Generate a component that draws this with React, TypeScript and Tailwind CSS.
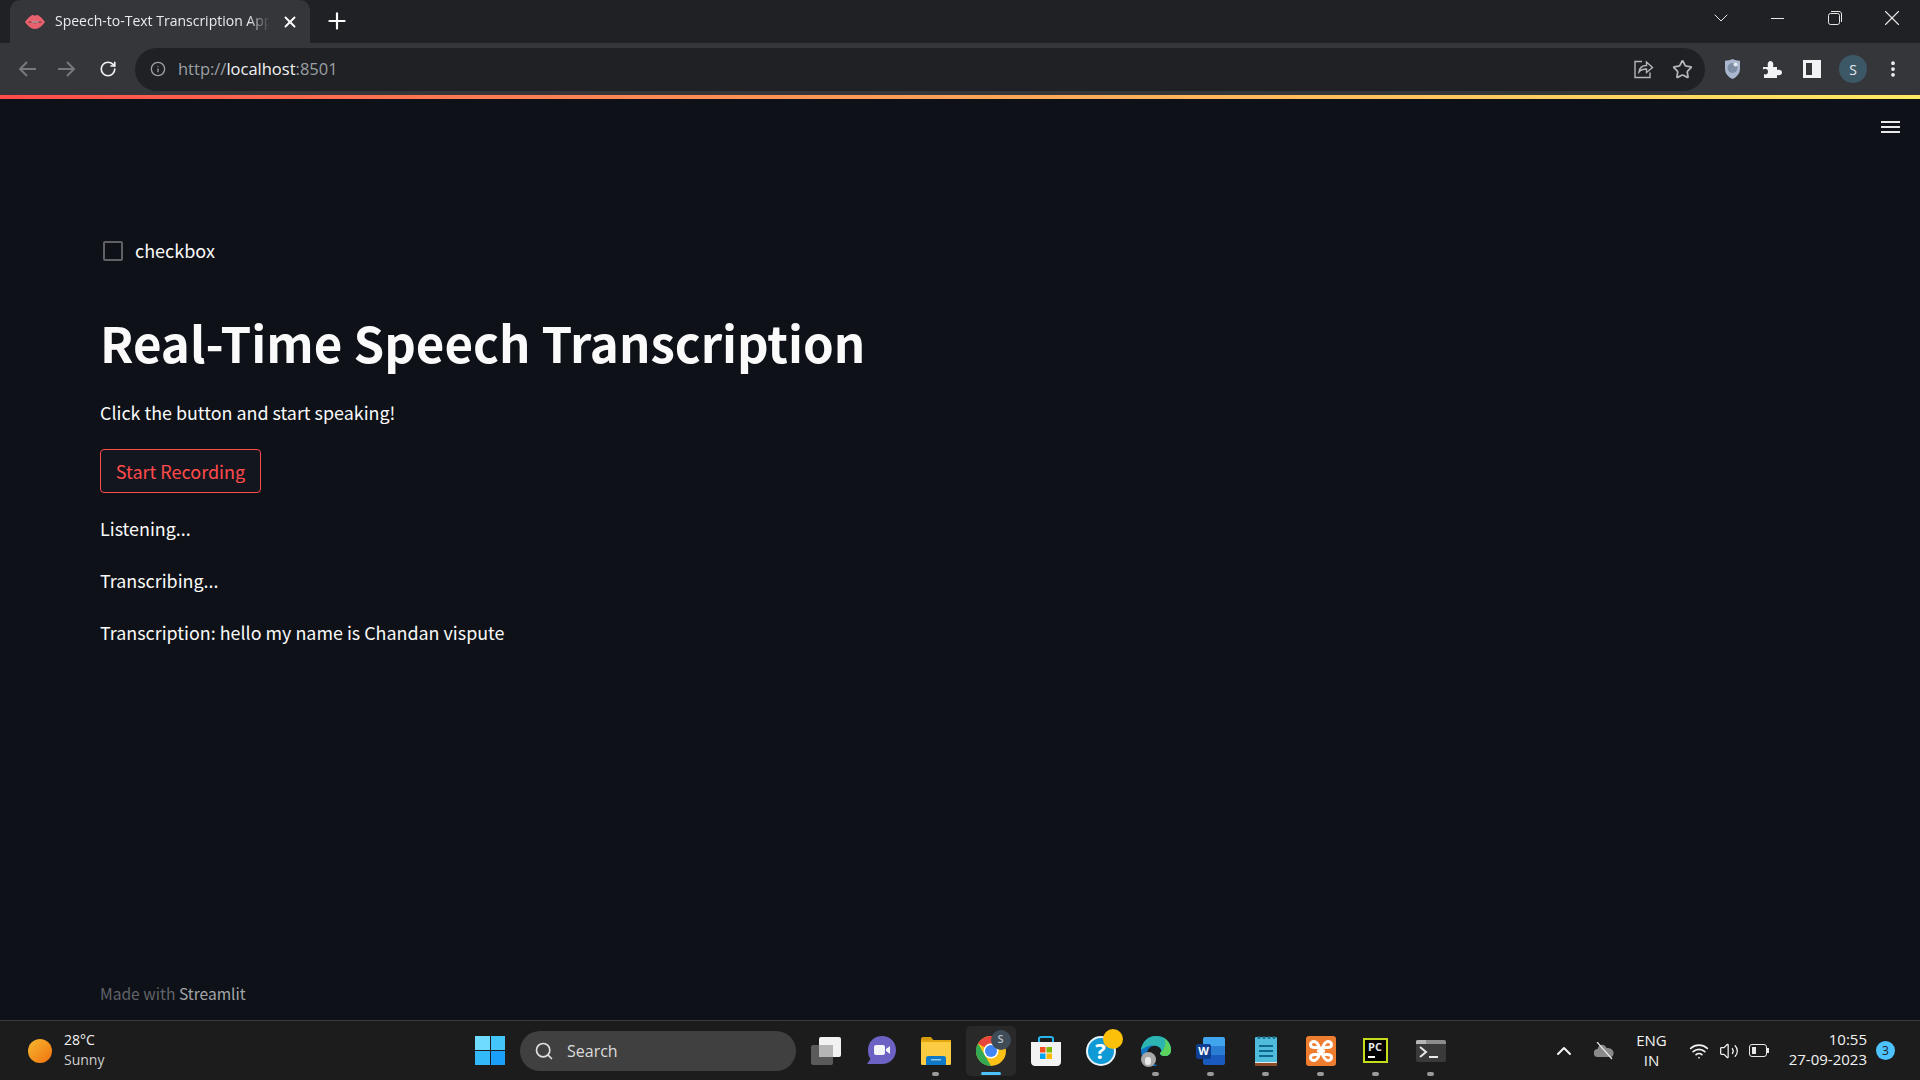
import { ChevronDown, ChevronUp, Info, MoreVertical, Plus, RotateCw, Search, Star, Volume2, Wifi, X } from 'lucide-react'
import type { ReactNode } from 'react'

const pageFont = "font-['Noto_Sans_CJK_SC','Noto_Sans',sans-serif]"
const systemFont = "font-['Open_Sans','Noto_Sans',sans-serif]"

const Lips = () => (
  <svg width="20" height="14" viewBox="0 0 20 14">
    <path d="M0 7C3 3 6 0 8 0c1 0 1.500.5 2 1 .5-.5 1-1 2-1 2 0 5 3 8 7-3 4-6 7-10 7S3 11 0 7z" fill="#e8616f" />
    <path d="M3 7c3-1 11-1 14 0-3 1.500-11 1.500-14 0z" fill="#5c1a1c" />
    <path d="M5 6.900c3-.5 7-.5 10 0-3 .8-7 .8-10 0z" fill="#f4f0ee" />
  </svg>
)

const NavArrow = ({ flip }: { flip?: boolean }) => (
  <svg className={flip ? 'rotate-180' : ''} width="20" height="20" viewBox="0 0 20 20" fill="none" stroke="#77787b" strokeWidth="2">
    <path d="M19 10H3M10 3l-7 7 7 7" />
  </svg>
)

const ShareIcon = () => (
  <svg width="20" height="20" viewBox="0 0 20 20" fill="none" stroke="#b4b6b9" strokeWidth="1.400">
    <path d="M8 2.500H1v16h15v-5" />
    <path d="M5 13c.5-4 3.500-6.500 7.500-6.500V3l6 5.500-6 5V10C9 10 6.500 11 5 13z" />
  </svg>
)

const ShieldIcon = () => (
  <svg width="15" height="20" viewBox="0 0 15 20">
    <path d="M7.500 0c2.500 1.200 4.500 1.700 7.500 1.700v8c0 5-3.500 8.500-7.500 10.300C3.500 18.200 0 14.700 0 9.700v-8C3 1.700 5 1.200 7.500 0z" fill="#a9b7cf" />
    <circle cx="7.500" cy="9" r="5" fill="#7f8da5" />
    <circle cx="10.500" cy="5.500" r="2" fill="#e4e8ef" />
  </svg>
)

const PuzzleIcon = () => (
  <svg width="19" height="19" viewBox="0 0 19 19" fill="#f1f3f4">
    <path d="M0 7h5C4 3 5.500 1 7.500 1S11 3 10 7h4v3c3-1 5 .5 5 2.500S17 16 14 15v3H1v-4c2 1 4 0 4-2.500S2 8 0 9.500z" />
  </svg>
)

const SidePanelIcon = () => (
  <span className="flex h-[18px] w-[18px] border-[3px] border-[#f1f3f4]">
    <span className="ml-auto h-full w-[6px] bg-[#f1f3f4]" />
  </span>
)

const MaximizeIcon = () => (
  <svg width="14" height="14" viewBox="0 0 14 14" fill="none" stroke="#e8e8e8" strokeWidth="1">
    <rect x="0.500" y="2.500" width="11" height="11" rx="2" />
    <path d="M3 .5h8c1.500 0 2.500 1 2.500 2.500v8" />
  </svg>
)

const TaskViewIcon = () => (
  <svg width="30" height="28" viewBox="0 0 30 28">
    <rect x="8" y="0" width="22" height="20" rx="2" fill="#f2f2f2" />
    <rect x="0" y="8" width="22" height="20" rx="2" fill="#5a5a5a" />
    <rect x="8" y="8" width="14" height="12" fill="#b5b5b5" />
  </svg>
)

const ChatIcon = () => (
  <svg width="30" height="29" viewBox="0 0 30 29">
    <path d="M16 0c8 0 14 6 14 14s-6 14-14 14H1l3.500-5C2.500 20.500 2 17.500 2 14 2 6 8 0 16 0z" fill="#6b62c4" />
    <rect x="8" y="9" width="11" height="10" rx="2" fill="#f4f4fb" />
    <path d="M20 13l4-3v8l-4-3z" fill="#f4f4fb" />
  </svg>
)

const FolderIcon = () => (
  <svg width="30" height="28" viewBox="0 0 30 28">
    <path d="M0 2c0-1 1-2 2-2h8l3 4H0z" fill="#d69c0c" />
    <rect x="0" y="3" width="30" height="25" rx="1.500" fill="#fbcb41" />
    <rect x="0" y="3" width="30" height="2" fill="#e3a80f" />
    <path d="M5 21c0-1 1-2 2-2h16c1 0 2 1 2 2v7H5z" fill="#0f79c7" />
    <rect x="10" y="22" width="10" height="1.500" fill="#8cc8f0" />
  </svg>
)

const ChromeIcon = () => (
  <span className="relative flex h-[30px] w-[30px]">
    <svg width="30" height="30" viewBox="0 0 30 30">
      <circle cx="15" cy="15" r="15" fill="#fbc116" />
      <path d="M15 0a15 15 0 0 1 13 7.500H15a7.500 7.500 0 0 0-6.500 3.700L2 7.500A15 15 0 0 1 15 0z" fill="#e8453c" />
      <path d="M2 7.500l6.500 11.200L15 30A15 15 0 0 1 2 7.500z" fill="#34a853" />
      <circle cx="15" cy="15" r="7.500" fill="#fff" />
      <circle cx="15" cy="15" r="6" fill="#4285f4" />
    </svg>
    <span className="absolute right-[-5px] top-[-6px] flex h-[20px] w-[20px] items-center justify-center rounded-full bg-[#3f4c57] text-[11px] font-semibold text-[#b9c2ca]">S</span>
  </span>
)

const StoreIcon = () => (
  <svg width="30" height="30" viewBox="0 0 30 30">
    <path d="M8 7V2.500C8 1.500 9 1 10 1h10c1 0 2 .5 2 1.500V7" fill="none" stroke="#26b4ea" strokeWidth="2" />
    <path d="M0 6h30v20c0 2-1.500 4-4 4H4c-2.500 0-4-2-4-4z" fill="#f3f3f3" />
    <rect x="9" y="11" width="5.500" height="5.500" fill="#f25022" />
    <rect x="15.500" y="11" width="5.500" height="5.500" fill="#7fba00" />
    <rect x="9" y="17.500" width="5.500" height="5.500" fill="#00a4ef" />
    <rect x="15.500" y="17.500" width="5.500" height="5.500" fill="#ffb900" />
  </svg>
)

const HelpIcon = () => (
  <span className="relative flex h-[30px] w-[30px] items-center justify-center rounded-full border-[2px] border-[#e8f4fa] bg-[#0f9ad6] text-[22px] font-bold text-white">
    ?
    <span className="absolute right-[-9px] top-[-9px] h-[20px] w-[20px] rounded-full bg-[#fcc00a]" />
  </span>
)

const EdgeIcon = () => (
  <span className="relative flex h-[30px] w-[30px]">
    <svg width="30" height="30" viewBox="0 0 30 30">
      <path d="M0 14C1 6 7 0 15 0c9 0 15 6 15 14 0 4-3 6-6 6-3 0-5-1-5-3 2-1 2-4-1-6-5-3-12 0-12 7 0 6 5 11 11 11-2 1-4 1-6 1C5 30 0 22 0 14z" fill="#0f74c4" />
      <path d="M0 14C1 6 7 0 15 0c9 0 15 6 15 14 0 4-3 6-6 6-3 0-5-1-5-3 2-1 2-4-1-6-6-3-13-1-18 3z" fill="#2cb5b0" />
      <path d="M19 17c0 2 2 3 5 3 3 0 6-2 6-6 0-5-3-9-7-12 3 5 1 11-4 15z" fill="#5bd35b" />
    </svg>
    <span className="absolute bottom-[-1px] left-0 flex h-[15px] w-[15px] items-end justify-center overflow-hidden rounded-full bg-[#a8a8a8]">
      <span className="mb-[2px] h-[8px] w-[6px] rounded-full bg-[#e9e9e9]" />
    </span>
  </span>
)

const WordIcon = () => (
  <span className="relative flex h-[28px] w-[29px] flex-col items-end">
    <span className="h-[9px] w-[22px] rounded-t-[2px] bg-[#41a5ee]" />
    <span className="h-[9px] w-[22px] bg-[#2b7cd3]" />
    <span className="h-[10px] w-[22px] rounded-b-[2px] bg-[#185abd]" />
    <span className="absolute left-0 top-[7px] flex h-[15px] w-[15px] items-center justify-center rounded-[2px] bg-[#103f91] text-[11px] font-bold text-white">W</span>
  </span>
)

const NotepadIcon = () => (
  <svg width="22" height="30" viewBox="0 0 22 30">
    <rect x="0" y="1" width="22" height="29" rx="1" fill="#4fbcdc" />
    <rect x="0" y="27" width="22" height="3" fill="#8a4b2a" />
    <rect x="0" y="26" width="22" height="1" fill="#e6e6e6" />
    <circle cx="4" cy="1.500" r="1.500" fill="#1c6f8a" />
    <circle cx="9" cy="1.500" r="1.500" fill="#1c6f8a" />
    <circle cx="14" cy="1.500" r="1.500" fill="#1c6f8a" />
    <circle cx="19" cy="1.500" r="1.500" fill="#1c6f8a" />
    <rect x="4" y="9" width="14" height="2" fill="#10688a" />
    <rect x="4" y="14" width="14" height="2" fill="#10688a" />
    <rect x="4" y="19" width="14" height="2" fill="#10688a" />
  </svg>
)

const XamppIcon = () => (
  <span className="flex h-[30px] w-[30px] items-center justify-center rounded-[3px] bg-[#ef7d2f]">
    <svg width="24" height="22" viewBox="0 0 24 22" fill="none" stroke="#fff" strokeWidth="3">
      <path d="M9 7.500H6C3 7.500 1.500 6 1.500 4.500S3 1.500 5 1.500c2 0 3 1.500 4 3l6 13c1 1.500 2 3 4 3s3.500-1.500 3.500-3-1.500-3-4.500-3h-3" />
      <path d="M15 7.500h3c3 0 4.500-1.500 4.500-3S21 1.500 19 1.500c-2 0-3 1.500-4 3l-6 13c-1 1.500-2 3-4 3s-3.500-1.500-3.500-3 1.500-3 4.500-3h3" />
      <path d="M8 11h8" />
    </svg>
  </span>
)

const PyCharmIcon = () => (
  <span className="flex h-[25px] w-[25px] flex-col border-[2px] border-[#c7dc1a] bg-black px-[3px] pt-[1px] text-[11px] font-bold leading-[12px] text-[#e8e8e8]">
    PC
    <span className="mt-[3px] h-[2px] w-[7px] bg-white" />
  </span>
)

const TerminalIcon = () => (
  <span className="flex h-[22px] w-[30px] flex-col overflow-hidden rounded-[2px] bg-[#3a3a3a]">
    <span className="flex h-[4px] bg-[#8c8c8c]">
      <span className="w-[10px] bg-[#b5b5b5]" />
    </span>
    <svg width="30" height="18" viewBox="0 0 30 18" fill="none" stroke="#e8e8e8" strokeWidth="2">
      <path d="M4 3l6 5-6 5" />
      <path d="M13 13h9" />
    </svg>
  </span>
)

const OneDriveIcon = () => (
  <svg width="20" height="18" viewBox="0 0 20 18">
    <path d="M4 15a4 4 0 0 1-.5-8C4.500 3.500 7 2 9.500 3c1.500.5 2.500 1.500 3 3 3-.5 6 1 7 4 .5 3-1 5-3 5z" fill="#8a8a8a" />
    <path d="M3 0l15 17" stroke="#e8e8e8" strokeWidth="1.200" />
  </svg>
)

const BatteryIcon = () => (
  <span className="flex items-center">
    <span className="flex h-[13px] w-[18px] rounded-[3px] border border-[#e8e8e8] p-[2px]">
      <span className="w-[4px] bg-[#e8e8e8]" />
    </span>
    <span className="h-[5px] w-[2px] bg-[#e8e8e8]" />
  </span>
)

const PageText = ({ children }: { children: ReactNode }) => (
  <p className="text-[17.9px] leading-[28px] text-[#fafafa]">{children}</p>
)

const WindowButton = ({ children }: { children: ReactNode }) => (
  <span className="flex h-[36px] w-[57px] items-center justify-center text-[#e8e8e8]">{children}</span>
)

const TaskbarItem = ({ children, dot, active }: { children: ReactNode; dot?: boolean; active?: boolean }) => (
  <div className={active ? 'relative mx-[2.5px] flex h-[50px] w-[50px] items-center justify-center rounded-[5px] bg-[#292929]' : 'relative flex h-[50px] w-[55px] items-center justify-center'}>
    {children}
    {dot && <span className="absolute bottom-[0px] h-[4px] w-[7px] rounded-full bg-[#9a9a9a]" />}
    {active && <span className="absolute bottom-[1px] h-[3px] w-[20px] rounded-full bg-[#4cc2ff]" />}
  </div>
)

export default function App() {
  return (
    <div className={`flex h-[1080px] w-[1920px] flex-col overflow-hidden bg-[#0e1117] ${systemFont}`}>
      {/* tab strip */}
      <div className="flex h-[43px] items-start bg-[#202124] pl-[10px]">
        <div className="flex h-[43px] w-[300px] items-center rounded-t-[10px] bg-[#35363a] pl-[15px] pr-[11px]">
          <Lips />
          <span className="mb-[2px] ml-[10px] w-[215px] overflow-hidden whitespace-nowrap text-[14px] text-[#e8eaed] [mask-image:linear-gradient(to_right,black_90%,transparent)]">
            Speech-to-Text Transcription App
          </span>
          <X className="ml-auto text-white" size={18} strokeWidth={2.5} />
        </div>
        <Plus className="ml-[14px] mt-[8px] text-white" size={26} strokeWidth={2} />
        <div className="ml-auto flex items-center">
          <WindowButton><ChevronDown size={24} strokeWidth={1} /></WindowButton>
          <WindowButton><span className="h-px w-[13px] bg-[#e8e8e8]" /></WindowButton>
          <WindowButton><MaximizeIcon /></WindowButton>
          <WindowButton><X size={26} strokeWidth={1} /></WindowButton>
        </div>
      </div>

      {/* toolbar */}
      <div className="flex h-[52px] items-center bg-[#35363a] pl-[17px]">
        <NavArrow />
        <span className="ml-[20px]"><NavArrow flip /></span>
        <RotateCw className="ml-[22px] text-[#f1f3f4]" size={18} strokeWidth={2.2} />
        <div className="ml-[18px] flex h-[43px] w-[1570px] items-center rounded-full bg-[#202124] pl-[15px] pr-[12px]">
          <Info className="text-[#9aa0a6]" size={16} />
          <span className="ml-[12px] text-[16.5px] text-[#9aa0a6]">
            http://<span className="text-[#f1f3f4]">localhost</span>:8501
          </span>
          <span className="ml-auto flex items-center gap-[18px]">
            <ShareIcon />
            <Star className="text-[#b4b6b9]" size={21} />
          </span>
        </div>
        <span className="ml-[20px]"><ShieldIcon /></span>
        <span className="ml-[23px]"><PuzzleIcon /></span>
        <span className="ml-[21px]"><SidePanelIcon /></span>
        <span className="ml-[18px] flex h-[28px] w-[28px] items-center justify-center rounded-full bg-[#3c5866] text-[14px] text-[#e8eaed]">S</span>
        <MoreVertical className="ml-[16px] text-[#f1f3f4]" size={20} strokeWidth={2.5} />
      </div>

      <div className="h-[4px] bg-gradient-to-r from-[#ff4b4b] to-[#ffea62]" />

      {/* streamlit page */}
      <main className={`relative flex flex-1 flex-col px-[100px] ${pageFont}`}>
        <div className="absolute right-[20px] top-[22px] flex w-[19px] flex-col gap-[3px]">
          <span className="h-[2px] bg-[#e8e8e8]" />
          <span className="h-[2px] bg-[#e8e8e8]" />
          <span className="h-[2px] bg-[#e8e8e8]" />
        </div>
        <label className="ml-[3px] mt-[138px] flex items-center gap-[12px] text-[18px] leading-[28px] text-[#fafafa]">
          <span className="h-[20px] w-[20px] rounded-[2px] border-2 border-[#5f6167] bg-[#0e1117]" />
          <span className="-translate-y-[1px]">checkbox</span>
        </label>
        <h1 className="mt-[41px] text-[49.2px] font-bold leading-[72px] text-[#fafafa]">Real-Time Speech Transcription</h1>
        <div className="mt-[20px]">
          <PageText>Click the button and start speaking!</PageText>
        </div>
        <button className="mt-[23px] h-[44px] w-[161px] rounded-[4px] border border-[#ff4b4b] bg-[#13161e] text-[18px] text-[#ff4b4b]">
          Start Recording
        </button>
        <div className="mt-[21px] flex flex-col gap-[24px]">
          <PageText>Listening...</PageText>
          <PageText>Transcribing...</PageText>
          <PageText>Transcription: hello my name is Chandan vispute</PageText>
        </div>
        <p className="mb-[14px] mt-auto text-[15.6px] leading-[26px] text-[#62646a]">
          Made with <span className="text-[#a3a5a9]">Streamlit</span>
        </p>
      </main>

      {/* windows taskbar */}
      <footer className="flex h-[60px] items-center border-t border-[#3a3a3a] bg-[#1c1c1c] text-[#f2f2f2]">
        <div className="flex w-[475px] items-center pl-[28px]">
          <span className="h-[24px] w-[24px] rounded-full bg-gradient-to-br from-[#f5b82e] to-[#f0700f]" />
          <div className="mb-[2px] ml-[12px] text-[14px] leading-[20px]">
            <div>28°C</div>
            <div className="text-[#cfcfcf]">Sunny</div>
          </div>
        </div>
        <div className="grid h-[29px] w-[30px] grid-cols-2 gap-[1px]">
          <span className="bg-[#6fdcff]" />
          <span className="bg-[#45c6fb]" />
          <span className="bg-[#33b8f8]" />
          <span className="bg-[#1a9ffa]" />
        </div>
        <div className="ml-[15px] flex h-[40px] w-[276px] items-center rounded-full bg-[#404040] pl-[14px]">
          <Search className="text-[#e0e0e0]" size={20} />
          <span className="ml-[13px] text-[16px] text-[#dcdcdc]">Search</span>
        </div>
        <div className="ml-[2px] flex items-center">
          <TaskbarItem><TaskViewIcon /></TaskbarItem>
          <TaskbarItem><ChatIcon /></TaskbarItem>
          <TaskbarItem dot><FolderIcon /></TaskbarItem>
          <TaskbarItem active><ChromeIcon /></TaskbarItem>
          <TaskbarItem><StoreIcon /></TaskbarItem>
          <TaskbarItem><HelpIcon /></TaskbarItem>
          <TaskbarItem dot><EdgeIcon /></TaskbarItem>
          <TaskbarItem dot><WordIcon /></TaskbarItem>
          <TaskbarItem dot><NotepadIcon /></TaskbarItem>
          <TaskbarItem dot><XamppIcon /></TaskbarItem>
          <TaskbarItem dot><PyCharmIcon /></TaskbarItem>
          <TaskbarItem dot><TerminalIcon /></TaskbarItem>
        </div>
        <div className="ml-auto flex items-center pr-[25px]">
          <ChevronUp size={24} strokeWidth={2} />
          <span className="ml-[18px]"><OneDriveIcon /></span>
          <div className="mb-[2px] ml-[22px] text-center text-[15px] leading-[20px]">
            <div>ENG</div>
            <div>IN</div>
          </div>
          <span className="ml-[22px] flex items-center gap-[10px]">
            <Wifi size={20} />
            <Volume2 size={20} strokeWidth={1.5} />
            <BatteryIcon />
          </span>
          <div className="mb-[3px] ml-[20px] text-right text-[15px] leading-[20px]">
            <div>10:55</div>
            <div>27-09-2023</div>
          </div>
          <span className="ml-[9px] flex h-[19px] w-[19px] items-center justify-center rounded-full bg-[#4cc2ff] text-[12px] text-[#1c1c1c]">3</span>
        </div>
      </footer>
    </div>
  )
}
